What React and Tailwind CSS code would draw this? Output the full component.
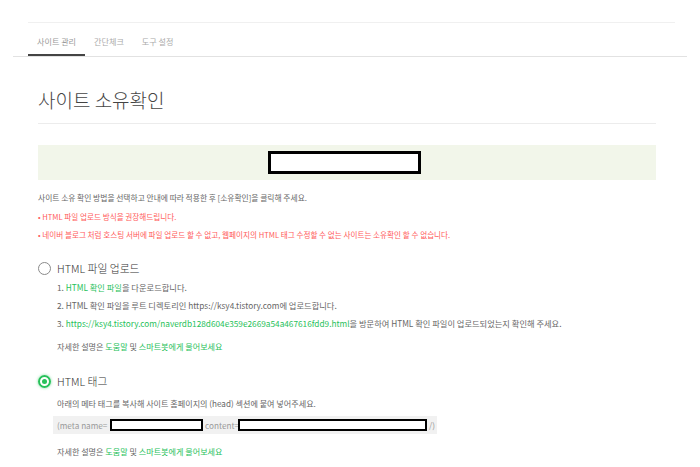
import React from "react";

const Radio = ({ checked }) =>
  checked ? (
    <span className="w-[13px] h-[13px] rounded-full border-[2px] border-[#27c15a] flex items-center justify-center shadow-[0_0_3px_rgba(39,193,90,0.6)]">
      <span className="w-[5px] h-[5px] rounded-full bg-[#27c15a]" />
    </span>
  ) : (
    <span className="w-[13px] h-[13px] rounded-full border-[1.5px] border-[#8a8a8a] bg-white" />
  );

const HelpLine = () => (
  <p className="text-[8.1px] leading-[12px] text-[#666]">
    자세한 설명은 <span className="text-[#27c15a]">도움말</span> 및{" "}
    <span className="text-[#27c15a]">스마트봇에게 물어보세요</span>
  </p>
);

const App = () => {
  const tabs = ["사이트 관리", "간단체크", "도구 설정"];

  return (
    <div className="w-[700px] h-[467px] overflow-hidden bg-white font-['Noto_Sans_CJK_KR','Noto_Sans',sans-serif]">
      {/* tab bar */}
      <div className="pt-[22px]">
        <div className="mx-[13px] border-b border-[#e2e2e2]">
          <div className="ml-[15px] mr-[12px] border-t border-[#f0f0f0] h-[34px] flex items-end">
            {tabs.map((t, i) => (
              <div
                key={t}
                className={`px-[9px] h-[19px] text-[8.1px] leading-[10px] ${
                  i === 0 ? "border-b-2 border-[#444] text-[#999]" : "text-[#aaa]"
                }`}
              >
                {t}
              </div>
            ))}
          </div>
        </div>
      </div>

      <div className="mx-[38px] w-[618px]">
        {/* title */}
        <div className="mt-[31px] pb-[11px] border-b border-[#ececec]">
          <h1 className="text-[19px] leading-[24px] font-light text-[#444]">사이트 소유확인</h1>
        </div>

        {/* code box */}
        <div className="mt-[21px] h-[35px] bg-[#f2f6ea] flex items-center justify-center">
          <div className="w-[153px] h-[23px] border-[3px] border-black bg-white -ml-[5px]" />
        </div>

        <p className="mt-[12px] text-[7.75px] leading-[12px] text-[#666]">
          사이트 소유 확인 방법을 선택하고 안내에 따라 적용한 후 [소유확인]을 클릭해 주세요.
        </p>
        <div className="mt-[4px] text-[7.6px] leading-[18px] text-[#ff5a5a]">
          <p>• HTML 파일 업로드 방식을 권장해드립니다.</p>
          <p>• 네이버 블로그 처럼 호스팅 서버에 파일 업로드 할 수 없고, 웹페이지의 HTML 태그 수정할 수 없는 사이트는 소유확인 할 수 없습니다.</p>
        </div>

        {/* option 1 */}
        <div className="mt-[17px] flex items-center gap-[6px] h-[14px]">
          <Radio />
          <span className="text-[10.8px] leading-[14px] font-light text-[#333]">HTML 파일 업로드</span>
        </div>
        <ol className="mt-[3px] ml-[19px] text-[8.25px] leading-[18px] text-[#666]">
          <li>
            1. <span className="text-[#27c15a]">HTML 확인 파일</span>을 다운로드합니다.
          </li>
          <li>2. HTML 확인 파일을 루트 디렉토리인 https://ksy4.tistory.com에 업로드합니다.</li>
          <li>
            3.{" "}
            <span className="text-[#27c15a]">
              https://ksy4.tistory.com/naverdb128d604e359e2669a54a467616fdd9.html
            </span>
            을 방문하여 HTML 확인 파일이 업로드되었는지 확인해 주세요.
          </li>
        </ol>
        <div className="mt-[9px] ml-[19px]">
          <HelpLine />
        </div>

        {/* option 2 */}
        <div className="mt-[21px] flex items-center gap-[6px] h-[14px]">
          <Radio checked />
          <span className="text-[10.8px] leading-[14px] font-light text-[#333]">HTML 태그</span>
        </div>
        <p className="mt-[10px] ml-[19px] text-[8.1px] leading-[12px] text-[#666]">
          아래의 메타 태그를 복사해 사이트 홈페이지의 (head) 섹션에 붙여 넣어주세요.
        </p>
        <div className="mt-[6px] ml-[15px] w-[384px] h-[18px] bg-[#f1f1f1] flex items-center pl-[4px] text-[8.2px] text-[#999]">
          <span className="w-[53px] shrink-0">(meta name=</span>
          <span className="w-[93px] h-[12px] border-[2px] border-black bg-white shrink-0" />
          <span className="w-[35px] shrink-0 pl-[2px]">content=</span>
          <span className="w-[189px] h-[12px] border-[2px] border-black bg-white shrink-0" />
          <span className="ml-[2px]">/)</span>
        </div>
        <div className="mt-[12px] ml-[19px]">
          <HelpLine />
        </div>
      </div>
    </div>
  );
};

export default App;
